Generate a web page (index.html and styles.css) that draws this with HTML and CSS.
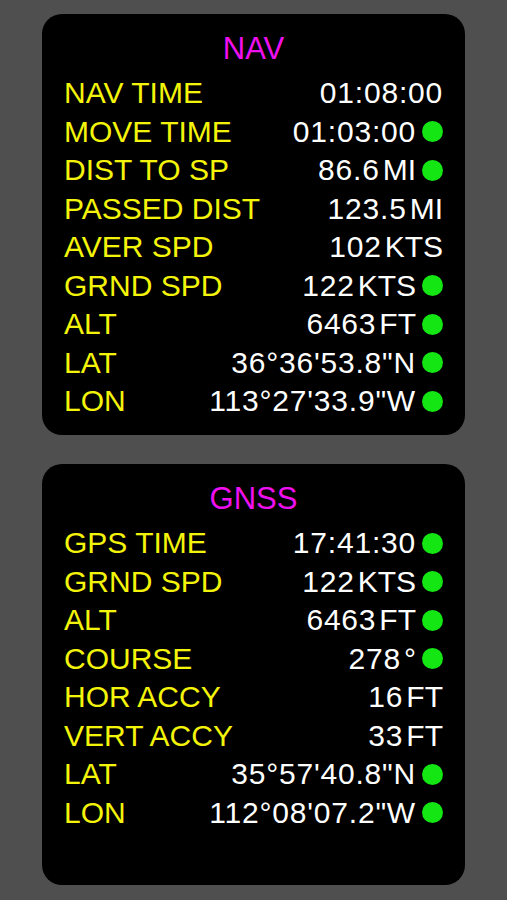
FILE: index.html
```html
<!DOCTYPE html>
<html>

<head>
  <title>Flight Data</title>
  <link rel="stylesheet" href="styles.css">
</head>

<body>
  <div class="screen">
    <div class="panel">
      <div class="title">NAV</div>
      <div class="row"><span class="label">NAV TIME</span><span class="value">01:08:00</span></div>
      <div class="row"><span class="label">MOVE TIME</span><span class="value">01:03:00</span><span class="dot"></span></div>
      <div class="row"><span class="label">DIST TO SP</span><span class="value">86.6<span class="unit">MI</span></span><span class="dot"></span></div>
      <div class="row"><span class="label">PASSED DIST</span><span class="value">123.5<span class="unit">MI</span></span></div>
      <div class="row"><span class="label">AVER SPD</span><span class="value">102<span class="unit">KTS</span></span></div>
      <div class="row"><span class="label">GRND SPD</span><span class="value">122<span class="unit">KTS</span></span><span class="dot"></span></div>
      <div class="row"><span class="label">ALT</span><span class="value">6463<span class="unit">FT</span></span><span class="dot"></span></div>
      <div class="row"><span class="label">LAT</span><span class="value">36°36'53.8"N</span><span class="dot"></span></div>
      <div class="row"><span class="label">LON</span><span class="value">113°27'33.9"W</span><span class="dot"></span></div>
    </div>

    <div class="panel">
      <div class="title">GNSS</div>
      <div class="row"><span class="label">GPS TIME</span><span class="value">17:41:30</span><span class="dot"></span></div>
      <div class="row"><span class="label">GRND SPD</span><span class="value">122<span class="unit">KTS</span></span><span class="dot"></span></div>
      <div class="row"><span class="label">ALT</span><span class="value">6463<span class="unit">FT</span></span><span class="dot"></span></div>
      <div class="row"><span class="label">COURSE</span><span class="value">278<span class="unit">°</span></span><span class="dot"></span></div>
      <div class="row"><span class="label">HOR ACCY</span><span class="value">16<span class="unit">FT</span></span></div>
      <div class="row"><span class="label">VERT ACCY</span><span class="value">33<span class="unit">FT</span></span></div>
      <div class="row"><span class="label">LAT</span><span class="value">35°57'40.8"N</span><span class="dot"></span></div>
      <div class="row"><span class="label">LON</span><span class="value">112°08'07.2"W</span><span class="dot"></span></div>
    </div>
  </div>
</body>

</html>
```

FILE: styles.css
```css
body {
  margin: 0;
  background-color: #4f4f4f;
  font-family: "Liberation Sans", Arial, sans-serif;
}

.screen {
  display: flex;
  flex-direction: column;
  gap: 29px;
  padding: 14px 0 0 42px;
}

.panel {
  box-sizing: border-box;
  width: 423px;
  height: 421px;
  padding: 16px 22px 0 22px;
  background-color: #000;
  border-radius: 20px;
}

.panel .title {
  height: 38px;
  line-height: 38px;
  margin-bottom: 6px;
  text-align: center;
  font-size: 31px;
  color: #ee10ee;
}

.panel .row {
  display: flex;
  align-items: center;
  height: 38.5px;
  font-size: 30px;
}

.panel .row .label {
  flex: 1;
  color: #f4f40a;
}

.panel .row .value {
  color: #fff;
  letter-spacing: 0.8px;
}

.panel .row .value .unit {
  margin-left: 3px;
  letter-spacing: 0;
}

.panel .row .dot {
  width: 21px;
  height: 21px;
  margin-left: 6px;
  border-radius: 50%;
  background-color: #14e614;
}
```
